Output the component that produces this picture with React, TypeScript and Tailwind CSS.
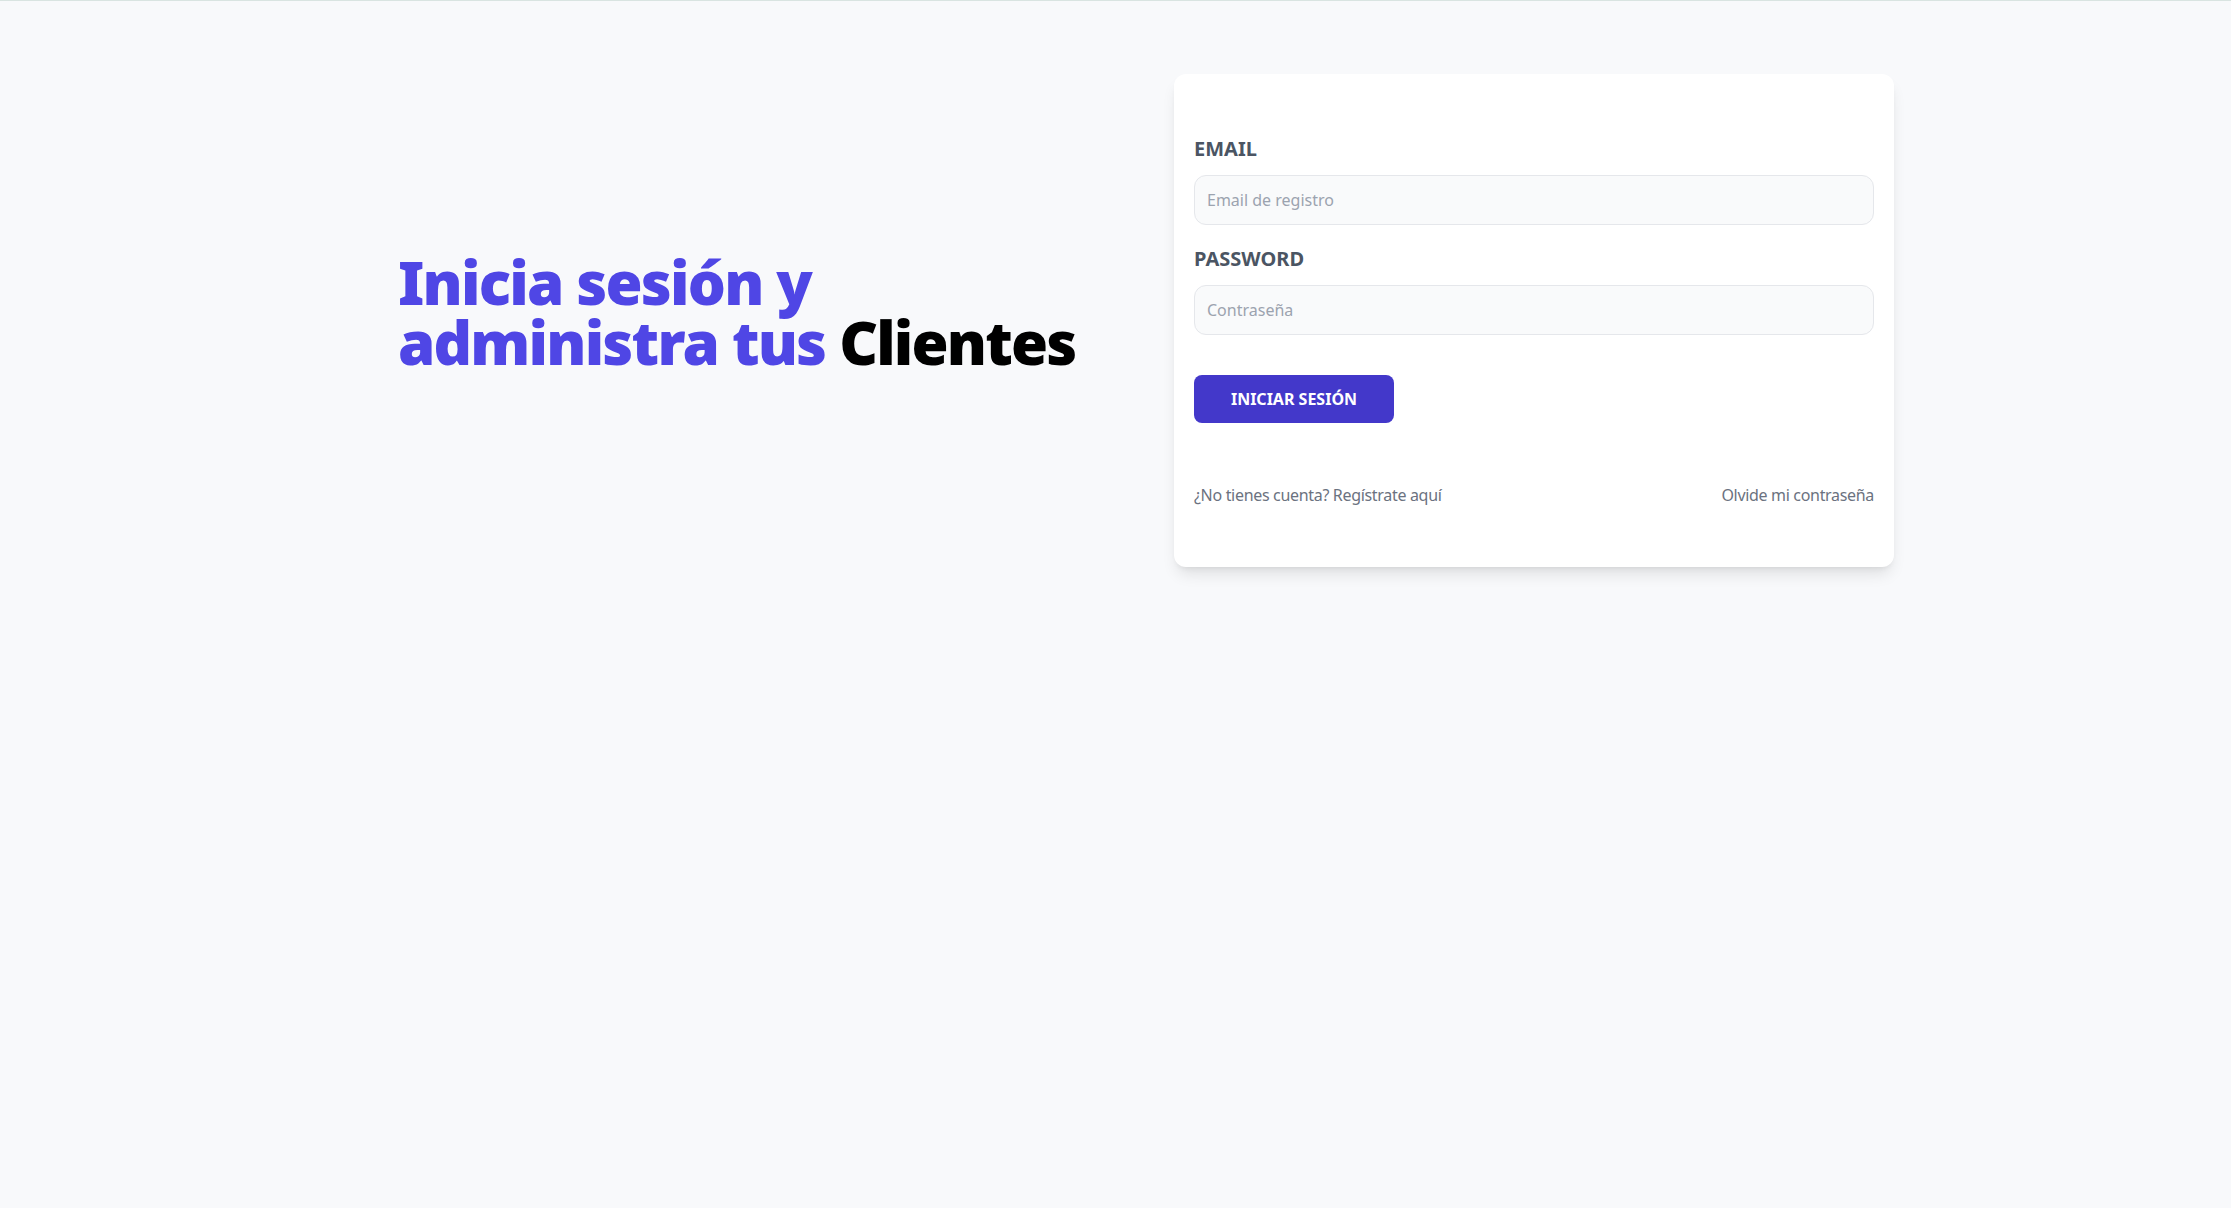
export default function App() {
  return (
    <div
      className="min-h-screen border-t border-[#d9e4e1] bg-[#f8f9fb]"
      style={{ fontFamily: '"Noto Sans", "Open Sans", sans-serif' }}
    >
      <main className="ml-[398px] grid w-[1496px] grid-cols-[723px_720px] items-center gap-[53px] pt-[73px]">
        {/* Heading */}
        <div className="pb-[18px]">
          <h1 className="text-6xl leading-none font-black tracking-[-0.03em] text-[#4f46e5]">
            Inicia sesión y administra tus <span className="text-black">Clientes</span>
          </h1>
        </div>

        {/* Login card */}
        <div className="rounded-xl bg-white px-5 pt-[41px] pb-10 shadow-lg">
          <form>
            <div className="my-5">
              <label className="block text-xl font-bold text-[#4b5563] uppercase">Email</label>
              <input
                type="email"
                placeholder="Email de registro"
                className="mt-3 w-full rounded-xl border border-[#e5e7eb] bg-[#f9fafb] p-3 text-base outline-none placeholder:text-[#9ca3af]"
              />
            </div>

            <div className="my-5">
              <label className="block text-xl font-bold text-[#4b5563] uppercase">Password</label>
              <input
                type="password"
                placeholder="Contraseña"
                className="mt-3 w-full rounded-xl border border-[#e5e7eb] bg-[#f9fafb] p-3 text-base outline-none placeholder:text-[#9ca3af]"
              />
            </div>

            <button
              type="button"
              className="mt-5 w-[200px] rounded-lg bg-[#4338ca] py-3 text-base font-bold text-white uppercase"
            >
              Iniciar sesión
            </button>
          </form>

          <nav className="mt-[60px] mb-5 flex justify-between text-base tracking-[-0.02em] text-[#6b7280]">
            <a href="#">¿No tienes cuenta? Regístrate aquí</a>
            <a href="#">Olvide mi contraseña</a>
          </nav>
        </div>
      </main>
    </div>
  );
}
